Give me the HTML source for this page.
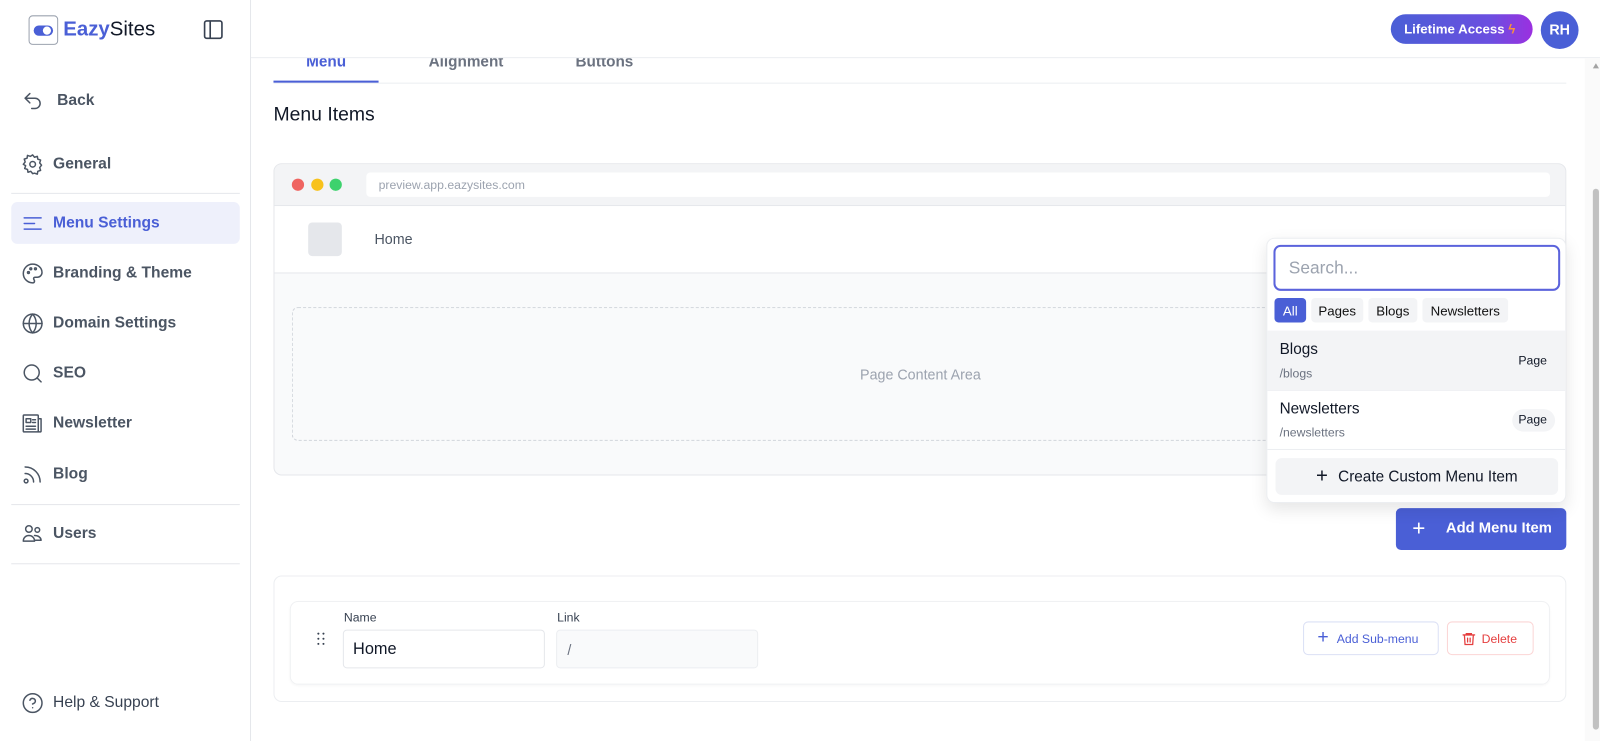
<!DOCTYPE html>
<html><head><meta charset="utf-8"><style>
*{box-sizing:border-box;margin:0;padding:0}
html,body{width:1600px;height:741px;overflow:hidden;background:#fff}
body{font-family:"Liberation Sans",sans-serif;color:#111827;position:relative}
#w{position:absolute;left:0;top:0;width:1568px;height:727px;transform:scale(1.0204);transform-origin:0 0}
.a{position:absolute}
.side{left:0;top:0;width:246px;height:727px;border-right:1px solid #e5e7eb;background:#fff}
.nav{position:absolute;left:11px;width:224px;height:41px;display:flex;align-items:center;font-size:15.3px;font-weight:bold;color:#4b5563}
.nav svg{position:absolute;left:10px;width:22px;height:22px;fill:none;stroke:#4b5563;stroke-width:1.6;stroke-linecap:round;stroke-linejoin:round}
.nav span{position:absolute;left:41px;top:12px}
.hr{position:absolute;left:11px;width:224px;height:1px;background:#e5e7eb}
.chip{position:absolute;top:292px;height:24px;border-radius:4px;background:#f3f4f6;font-size:13px;color:#111;display:flex;align-items:center;justify-content:center}
.dot{position:absolute;width:2px;height:2px;background:#374151;border-radius:1px}
</style></head><body><div id="w">
<div class="a" style="left:300px;top:52px;font-size:15px;font-weight:bold;color:#4a5fd6">Menu</div>
<div class="a" style="left:420px;top:52px;font-size:15px;font-weight:bold;color:#6b7280">Alignment</div>
<div class="a" style="left:564px;top:52px;font-size:15px;font-weight:bold;color:#6b7280">Buttons</div>
<div class="a" style="left:268px;top:81px;width:1267px;height:1px;background:#eceef1"></div>
<div class="a" style="left:268px;top:79px;width:103px;height:2px;background:#4a5fd6"></div>
<div class="a" style="left:268px;top:102px;font-size:19px;color:#111827">Menu Items</div>

<div class="a" style="left:268px;top:160px;width:1267px;height:306px;border:1px solid #e5e7eb;border-radius:8px;background:#f9fafb;overflow:hidden">
 <div class="a" style="left:0;top:0;width:100%;height:41px;background:#f3f4f6;border-bottom:1px solid #e5e7eb"></div>
 <div class="a" style="left:17px;top:14px;width:12px;height:12px;border-radius:50%;background:#ef6461"></div>
 <div class="a" style="left:36px;top:14px;width:12px;height:12px;border-radius:50%;background:#f8c21c"></div>
 <div class="a" style="left:54px;top:14px;width:12px;height:12px;border-radius:50%;background:#3dd26d"></div>
 <div class="a" style="left:90px;top:8px;width:1160px;height:24px;background:#fff;border-radius:4px;font-size:12px;color:#9ca3af;padding:5px 12px">preview.app.eazysites.com</div>
 <div class="a" style="left:0;top:41px;width:100%;height:66px;background:#fff;border-bottom:1px solid #e5e7eb"></div>
 <div class="a" style="left:33px;top:57px;width:33px;height:33px;background:#e5e7eb;border-radius:4px"></div>
 <div class="a" style="left:98px;top:65px;font-size:14px;color:#4b5563">Home</div>
 <div class="a" style="left:17px;top:140px;width:1232px;height:131px;border:1px dashed #d1d5db;border-radius:6px;display:flex;align-items:center;justify-content:center;font-size:14px;color:#9ca3af">Page Content Area</div>
</div>

<div class="a" style="left:1368px;top:498px;width:167px;height:41px;background:#4a5fd6;border-radius:5px;color:#fff;font-size:14.5px;font-weight:bold">
 <span class="a" style="left:16px;top:7px;font-size:22px;font-weight:normal">+</span><span class="a" style="left:49px;top:12px">Add Menu Item</span></div>

<div class="a" style="left:268px;top:564px;width:1267px;height:124px;border:1px solid #eceef1;border-radius:8px"></div>
<div class="a" style="left:284px;top:589px;width:1235px;height:82px;border:1px solid #f0f1f3;border-radius:8px;box-shadow:0 1px 2px rgba(0,0,0,.03)"></div>
<div class="dot" style="left:311px;top:620px"></div><div class="dot" style="left:316px;top:620px"></div>
<div class="dot" style="left:311px;top:625px"></div><div class="dot" style="left:316px;top:625px"></div>
<div class="dot" style="left:311px;top:630px"></div><div class="dot" style="left:316px;top:630px"></div>
<div class="a" style="left:337px;top:598px;font-size:12px;color:#374151">Name</div>
<div class="a" style="left:546px;top:598px;font-size:12px;color:#374151">Link</div>
<div class="a" style="left:336px;top:617px;width:198px;height:38px;border:1px solid #e5e7eb;border-radius:4px;font-size:16px;padding:10px 9px">Home</div>
<div class="a" style="left:545px;top:617px;width:198px;height:38px;border:1px solid #eceef1;background:#f9fafb;border-radius:4px;font-size:14px;color:#6b7280;padding:11px 10px">/</div>
<div class="a" style="left:1277px;top:609px;width:133px;height:33px;border:1px solid #dbe0f5;border-radius:5px;font-size:12px;color:#4a5fd6;padding:9px 0 0 32px"><span class="a" style="left:13px;top:4px;font-size:19px">+</span>Add Sub-menu</div>
<div class="a" style="left:1418px;top:609px;width:85px;height:33px;border:1px solid #fbd5d5;border-radius:5px;font-size:12px;color:#e53e3e;padding:9px 0 0 33px">
<svg class="a" style="left:13px;top:8px" width="15" height="16" viewBox="0 0 24 24" fill="none" stroke="#e53e3e" stroke-width="2" stroke-linecap="round"><path d="M3 6h18M8 6V4h8v2M5 6l1 15h12l1-15M10 11v6M14 11v6"/></svg>Delete</div>

<div class="a" style="left:1241px;top:233px;width:294px;height:260px;background:#fff;border:1px solid #eceef1;border-radius:8px;box-shadow:0 6px 16px rgba(0,0,0,.10);overflow:hidden">
 <div class="a" style="left:6px;top:6px;width:281px;height:45px;border:2px solid #5b63dc;border-radius:7px;font-size:17px;color:#9ca3af;padding:11px 13px">Search...</div>
 <div class="a" style="left:0;top:90px;width:100%;height:58px;background:#f3f4f6"></div>
 <div class="a" style="left:12px;top:100px;font-size:15px">Blogs</div>
 <div class="a" style="left:12px;top:125px;font-size:12px;color:#6b7280">/blogs</div>
 <div class="a" style="left:246px;top:112px;font-size:12px">Page</div>
 <div class="a" style="left:0;top:148px;width:100%;height:1px;background:#eceef1"></div>
 <div class="a" style="left:12px;top:158px;font-size:15px">Newsletters</div>
 <div class="a" style="left:12px;top:183px;font-size:12px;color:#6b7280">/newsletters</div>
 <div class="a" style="left:240px;top:167px;width:42px;height:22px;border-radius:11px;background:#f3f4f6;font-size:12px;padding:3px 6px">Page</div>
 <div class="a" style="left:0;top:206px;width:100%;height:1px;background:#eceef1"></div>
 <div class="a" style="left:8px;top:215px;width:277px;height:36px;background:#f3f4f6;border-radius:6px;font-size:15px;display:flex;align-items:center;justify-content:center"><span style="font-size:20px;margin-right:10px">+</span>Create Custom Menu Item</div>
</div>
<div class="chip" style="left:1249px;width:31px;background:#4a5fd6;color:#fff">All</div>
<div class="chip" style="left:1285px;width:51px">Pages</div>
<div class="chip" style="left:1341px;width:48px">Blogs</div>
<div class="chip" style="left:1394px;width:84px">Newsletters</div>

<div class="a" style="left:246px;top:0;width:1322px;height:57px;background:#fff;border-bottom:1px solid #eceef1"></div>
<div class="a" style="left:1363px;top:14px;width:139px;height:29px;border-radius:15px;background:linear-gradient(90deg,#4a5fd6,#6b4fe0 70%,#9b30e0);color:#fff;font-size:13px;font-weight:bold;padding:7px 0 0 13px">Lifetime Access <span style="color:#fb923c">ϟ</span></div>
<div class="a" style="left:1510px;top:11px;width:37px;height:37px;border-radius:50%;background:#4a5fd6;color:#fff;font-size:14px;font-weight:bold;text-align:center;line-height:37px">RH</div>
<div class="a" style="left:1553px;top:57px;width:15px;height:670px;background:#fafafa"></div>
<div class="a" style="left:1561px;top:62px;width:0;height:0;border-left:3px solid transparent;border-right:3px solid transparent;border-bottom:5px solid #a3a3a3"></div>
<div class="a" style="left:1561px;top:185px;width:6px;height:530px;border-radius:3px;background:#c1c1c1"></div>

<div class="a side">
 <div class="a" style="left:28px;top:15px;width:29px;height:29px;border:1px solid #9ca3af;border-radius:4px"><div class="a" style="left:4px;top:9px;width:19px;height:10px;border-radius:5px;background:#4a5fd6"></div><div class="a" style="left:13px;top:10px;width:8px;height:8px;border-radius:50%;background:#fff"></div></div>
 <div class="a" style="left:62px;top:18px;font-size:20px;color:#111827"><b style="color:#4a5fd6">Eazy</b>Sites</div>
 <svg class="a" style="left:199px;top:19px" width="20" height="20" viewBox="0 0 20 20" fill="none" stroke="#374151" stroke-width="1.6"><rect x="1.5" y="1.5" width="17" height="17" rx="2"/><path d="M7 1.5v17"/></svg>
 <div class="nav" style="top:78px"><svg viewBox="0 0 24 24"><path d="M9 14L4 9l5-5"/><path d="M4 9h10.5a5.5 5.5 0 0 1 0 11H11"/></svg><span style="left:45px">Back</span></div>
 <div class="nav" style="top:140px"><svg viewBox="0 0 24 24"><circle cx="12" cy="12" r="3"/><path d="M12 2l2 2.5 3-1 .5 3 3 1-1 3 2 2.5-2 2.5 1 3-3 1-.5 3-3-1L12 22l-2-2.5-3 1-.5-3-3-1 1-3L2 12l2-2.5-1-3 3-1 .5-3 3 1z"/></svg><span>General</span></div>
 <div class="hr" style="top:189px"></div>
 <div class="nav" style="top:198px;background:#eef0fb;border-radius:6px;color:#4a5fd6"><svg viewBox="0 0 24 24" style="stroke:#4a5fd6"><path d="M3 6h18M3 12h11M3 18h18"/></svg><span>Menu Settings</span></div>
 <div class="nav" style="top:247px"><svg viewBox="0 0 24 24"><path d="M12 2a10 10 0 0 0 0 20c1.5 0 2-1 2-2s-1-1.5-1-2.5 1-1.5 2-1.5h2a5 5 0 0 0 5-5c0-5-4.5-9-10-9z"/><circle cx="7.5" cy="11" r="1"/><circle cx="10" cy="7" r="1"/><circle cx="15" cy="7" r="1"/></svg><span>Branding &amp; Theme</span></div>
 <div class="nav" style="top:296px"><svg viewBox="0 0 24 24"><circle cx="12" cy="12" r="10"/><path d="M2 12h20M12 2a15 15 0 0 1 0 20M12 2a15 15 0 0 0 0 20"/></svg><span>Domain Settings</span></div>
 <div class="nav" style="top:345px"><svg viewBox="0 0 24 24"><circle cx="11" cy="11" r="8"/><path d="M21 21l-4.3-4.3"/></svg><span>SEO</span></div>
 <div class="nav" style="top:394px"><svg viewBox="0 0 24 24"><rect x="2" y="3" width="16" height="18" rx="1"/><path d="M18 7h3v13a1 1 0 0 1-1 1h-2M5 7h5v4H5zM12 8h3M12 11h3M5 15h10M5 18h10"/></svg><span>Newsletter</span></div>
 <div class="nav" style="top:444px"><svg viewBox="0 0 24 24"><path d="M4 11a9 9 0 0 1 9 9M4 4a16 16 0 0 1 16 16"/><circle cx="5" cy="19" r="2"/></svg><span>Blog</span></div>
 <div class="hr" style="top:494px"></div>
 <div class="nav" style="top:502px"><svg viewBox="0 0 24 24"><circle cx="8" cy="7" r="3.5"/><circle cx="17" cy="8" r="2.5"/><path d="M2 20c0-4 3-6 6-6s6 2 6 6zM14 14c4 0 7 2 7 5h-6"/></svg><span>Users</span></div>
 <div class="hr" style="top:552px"></div>
 <div class="nav" style="top:668px;font-weight:normal;color:#374151"><svg viewBox="0 0 24 24"><circle cx="12" cy="12" r="10"/><path d="M9.1 9a3 3 0 0 1 5.8 1c0 2-3 3-3 3M12 17h.01"/></svg><span>Help &amp; Support</span></div>
</div>
</div></body></html>
